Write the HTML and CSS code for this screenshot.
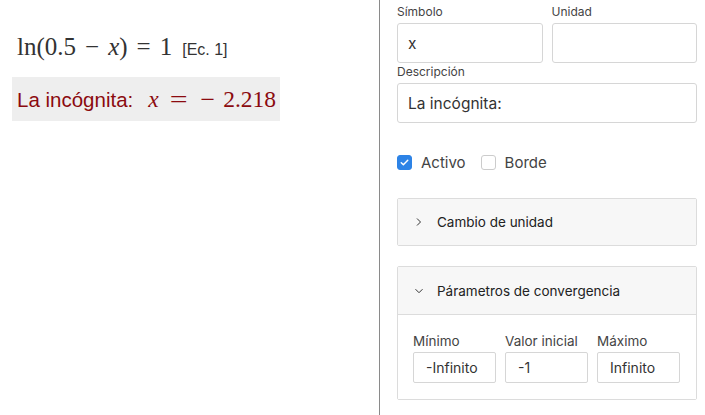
FILE: index.html
```html
<!DOCTYPE html>
<html lang="es">
<head>
<meta charset="utf-8">
<link rel="stylesheet" href="styles.css">
</head>
<body>
<div class="app">
  <main class="doc">
    <div class="eq">
      <span class="math">ln(0.5<span class="op">−</span><i>x</i>)<span class="op">=</span>1</span>
      <span class="eqno">[Ec. 1]</span>
    </div>
    <div class="result">
      <span class="desc">La incógnita:</span>
      <span class="math"><i>x</i><span class="op">=</span><span class="neg">−</span>2.218</span>
    </div>
  </main>
  <aside class="panel">
    <div class="row2">
      <label class="field">
        <span class="lbl">Símbolo</span>
        <span class="input">x</span>
      </label>
      <label class="field">
        <span class="lbl">Unidad</span>
        <span class="input"></span>
      </label>
    </div>
    <label class="field desc-field">
      <span class="lbl">Descripción</span>
      <span class="input">La incógnita:</span>
    </label>
    <div class="checks">
      <span class="check"><span class="box on"><svg viewBox="0 0 16 16" width="15" height="15"><path d="M4 8.2l2.6 2.5L12 5.3" fill="none" stroke="#fff" stroke-width="1.8" stroke-linecap="round" stroke-linejoin="round"/></svg></span>Activo</span>
      <span class="check"><span class="box"></span>Borde</span>
    </div>
    <div class="acc">
      <div class="acc-head"><svg class="chev" viewBox="0 0 10 10" width="10" height="10"><path d="M3 1.5L6.5 5 3 8.5" fill="none" stroke="#333" stroke-width="1"/></svg>Cambio de unidad</div>
    </div>
    <div class="acc open">
      <div class="acc-head"><svg class="chev" viewBox="0 0 10 10" width="10" height="10"><path d="M1.5 3.2L5 6.7 8.5 3.2" fill="none" stroke="#333" stroke-width="1"/></svg>Párametros de convergencia</div>
      <div class="acc-body">
        <label class="field sm"><span class="lbl">Mínimo</span><span class="input">-Infinito</span></label>
        <label class="field sm"><span class="lbl">Valor inicial</span><span class="input">-1</span></label>
        <label class="field sm"><span class="lbl">Máximo</span><span class="input">Infinito</span></label>
      </div>
    </div>
  </aside>
</div>
</body>
</html>
```
FILE: styles.css
```css
* { box-sizing: border-box; }
html, body { margin: 0; padding: 0; background: #fff; }
body { width: 705px; height: 415px; overflow: hidden; }
.app { display: flex; height: 415px; }
.doc { width: 379px; padding: 33px 0 0 12px; }
.eq { display: flex; align-items: baseline; padding-left: 5px; color: #333; }
.math { font-family: "Liberation Serif", "DejaVu Serif", serif; font-size: 23.5px; white-space: nowrap; }
.math i { font-style: italic; }
.eq .math { color: #333; font-size: 25px; }
.eq .op { margin: 0 9px; }
.eqno { font-family: "Liberation Sans", Arial, sans-serif; font-size: 16px; margin-left: 10px; color: #333; }
.result { margin-top: 16px; width: 268px; height: 44px; background: #eee; color: #8b0a0f; display: flex; align-items: center; padding-left: 5px; padding-top: 1px; }
.result .desc { font-family: "Liberation Sans", Arial, sans-serif; font-size: 20.5px; margin-right: 15px; }
.result .math { font-size: 23.5px; color: #8b0a0f; }
.result .op { margin: 0 9px 0 13px; display: inline-block; transform: scaleX(1.35); }
.result .neg { margin: 0 9px 0 7px; display: inline-block; transform: scaleX(1.1); }
.panel { width: 326px; border-left: 1px solid #8a8a8a; padding: 4px 8px 0 17px; font-family: Inter, "Noto Sans", sans-serif; color: #333; }
.row2 { display: flex; gap: 9px; }
.row2 .field { width: 146px; }
.field { display: flex; flex-direction: column; }
.lbl { font-size: 12px; line-height: 16px; height: 19px; color: #444; }
.input { height: 40px; border: 1px solid #d6d6d6; border-radius: 3px; font-size: 15.5px; padding: 0 10px; display: flex; align-items: center; color: #333; }
.desc-field .lbl { height: 20px; line-height: 18px; }
.checks { display: flex; gap: 15px; margin-top: 30px; font-size: 15px; color: #444; }
.check { display: flex; align-items: center; gap: 9px; }
.box { width: 15px; height: 15px; border: 1px solid #ccc; border-radius: 3px; display: inline-flex; align-items: center; justify-content: center; }
.box.on { background: #2d83e6; border-color: #2d83e6; }
.box svg { display: block; }
.acc { border: 1px solid #dcdcdc; border-radius: 2px; margin-top: 26px; }
.acc.open { margin-top: 20px; }
.acc-head { height: 46px; background: #f7f7f7; display: flex; align-items: center; font-size: 13.5px; color: #222; padding-left: 16px; }
.acc.open .acc-head { height: 48px; border-bottom: 1px solid #dcdcdc; }
.chev { margin-right: 13px; }
.acc-body { background: #fff; display: flex; gap: 9px; padding: 18px 16px 16px 15px; }
.field.sm { width: 83px; }
.field.sm .lbl { font-size: 13.5px; height: 19px; color: #444; }
.field.sm .input { height: 31px; font-size: 14px; padding: 0 12px; border-radius: 2px; }
```
